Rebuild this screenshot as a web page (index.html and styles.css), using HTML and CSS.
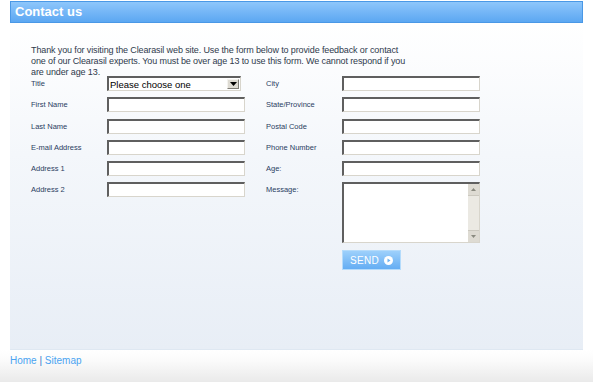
FILE: index.html
```html
<html>
<head>
    <title>Contact us</title>
    <link rel="stylesheet" href="styles.css">
</head>
<body>
    <div class="page">
        <div class="header">
            <h1>Contact us</h1>
        </div>
        <div class="panel">
            <p class="intro">Thank you for visiting the Clearasil web site. Use the form below to provide feedback or contact one of our Clearasil experts. You must be over age 13 to use this form. We cannot respond if you are under age 13.</p>
            <form class="contact-form" onsubmit="return false">
                <div class="col">
                    <label for="title">Title</label>
                    <div class="select-box">
                        <select id="title">
                            <option value="">Please choose one</option>
                            <option value="mr">Mr.</option>
                            <option value="mrs">Mrs.</option>
                            <option value="ms">Ms.</option>
                        </select>
                        <span class="select-btn">
                            <svg width="7" height="4" viewBox="0 0 7 4"><path d="M0 0h7L3.5 4z" fill="#000"/></svg>
                        </span>
                    </div>
                    <label for="first-name">First Name</label>
                    <input type="text" id="first-name">
                    <label for="last-name">Last Name</label>
                    <input type="text" id="last-name">
                    <label for="email">E-mail Address</label>
                    <input type="email" id="email">
                    <label for="address1">Address 1</label>
                    <input type="text" id="address1">
                    <label for="address2">Address 2</label>
                    <input type="text" id="address2">
                </div>
                <div class="col">
                    <label for="city">City</label>
                    <input type="text" id="city">
                    <label for="state">State/Province</label>
                    <input type="text" id="state">
                    <label for="postal">Postal Code</label>
                    <input type="text" id="postal">
                    <label for="phone">Phone Number</label>
                    <input type="tel" id="phone">
                    <label for="age">Age:</label>
                    <input type="text" id="age">
                    <label for="message" class="top">Message:</label>
                    <div class="message-box">
                        <textarea id="message"></textarea>
                        <div class="scrollbar">
                            <span class="scroll-btn"><svg width="5" height="3" viewBox="0 0 5 3"><path d="M0 3h5L2.5 0z" fill="#8a8a80"/></svg></span>
                            <span class="scroll-track"></span>
                            <span class="scroll-btn"><svg width="5" height="3" viewBox="0 0 5 3"><path d="M0 0h5L2.5 3z" fill="#8a8a80"/></svg></span>
                        </div>
                    </div>
                    <span></span>
                    <button type="submit" class="send-btn">SEND
                        <svg width="9" height="9" viewBox="0 0 9 9"><circle cx="4.5" cy="4.5" r="4.5" fill="#fff"/><path d="M3.5 2.5v4l3-2z" fill="#6db3f2"/></svg>
                    </button>
                </div>
            </form>
        </div>
    </div>
    <div class="footer">
        <a href="#">Home</a> | <a href="#">Sitemap</a>
    </div>
</body>
</html>
```

FILE: styles.css
```css
body {
    margin: 0;
    background-color: #fff;
    font-family: "Liberation Sans", Arial, sans-serif;
}

.page {
    margin: 0 10px;
    padding-top: 1px;
}

.header {
    height: 20px;
    border: 1px solid #4a98e6;
    background: linear-gradient(#8ec6fb, #5ca7f2);
    padding-left: 4px;
}

.header h1 {
    margin: 0;
    color: #fff;
    font-size: 13px;
    line-height: 20px;
    font-weight: bold;
}

.panel {
    box-sizing: border-box;
    height: 327px;
    padding: 20px 0 0 21px;
    background: linear-gradient(#ffffff, #f4f7fb 40%, #e8eef6);
    border-bottom: 1px solid #dfe8f2;
}

.intro {
    width: 377px;
    margin: 2px 0 -2px;
    font-size: 9px;
    line-height: 11px;
    letter-spacing: -0.12px;
    color: #2f3a4c;
}

.contact-form {
    display: flex;
    gap: 21px;
}

.col {
    display: grid;
    grid-template-columns: 76px 138px;
    grid-auto-rows: min-content;
    row-gap: 6.3px;
    align-items: center;
}

.col label {
    font-size: 7.5px;
    color: #2a3d62;
}

.col label.top {
    align-self: start;
    line-height: 15px;
}

.col input {
    box-sizing: border-box;
    width: 138px;
    height: 15px;
    margin: 0;
    padding: 0 2px;
    border: 1px solid;
    border-color: #5f5f5f #d8d5cc #d8d5cc #5f5f5f;
    border-top-width: 2px;
    border-left-width: 2px;
    background: #fff;
    font-size: 9px;
}

.select-box {
    box-sizing: border-box;
    display: flex;
    align-items: center;
    width: 134px;
    height: 15px;
    border: 1px solid;
    border-color: #5f5f5f #d8d5cc #d8d5cc #5f5f5f;
    border-top-width: 2px;
    border-left-width: 2px;
    background: #fff;
}

.select-box select {
    flex: 1;
    min-width: 0;
    height: 100%;
    margin: 0;
    padding: 0 0 0 1px;
    border: none;
    outline: none;
    appearance: none;
    background: transparent;
    font-family: "Liberation Sans", Arial, sans-serif;
    font-size: 9.5px;
    color: #000;
}

.select-btn {
    display: flex;
    align-items: center;
    justify-content: center;
    box-sizing: border-box;
    width: 12px;
    height: 10px;
    margin-right: 1px;
    background: #dedbd3;
    border: 1px solid;
    border-color: #f4f3ef #7f7d76 #7f7d76 #f4f3ef;
}

.message-box {
    box-sizing: border-box;
    display: flex;
    width: 138px;
    height: 61px;
    border: 1px solid;
    border-color: #5f5f5f #d8d5cc #d8d5cc #5f5f5f;
    border-top-width: 2px;
    border-left-width: 2px;
    background: #fff;
}

.message-box textarea {
    flex: 1;
    min-width: 0;
    margin: 0;
    padding: 1px;
    border: none;
    outline: none;
    resize: none;
    font-size: 9px;
}

.scrollbar {
    display: flex;
    flex-direction: column;
    width: 11px;
    background: #ebe9e3;
}

.scroll-btn {
    display: flex;
    align-items: center;
    justify-content: center;
    height: 11px;
    background: #dedbd3;
    border-bottom: 1px solid #cbc8bf;
}

.scroll-btn:last-child {
    border-bottom: none;
    border-top: 1px solid #cbc8bf;
}

.scroll-track {
    flex: 1;
}

.send-btn {
    display: flex;
    align-items: center;
    justify-content: center;
    gap: 5px;
    width: 59px;
    height: 20px;
    margin-top: 0.7px;
    padding: 0;
    border: 1px solid #b4dbfb;
    background: linear-gradient(#9dd0fb, #64adf3);
    color: #fff;
    font-family: "Liberation Sans", Arial, sans-serif;
    font-size: 10px;
    letter-spacing: 0.3px;
    cursor: pointer;
}

.footer {
    height: 33px;
    padding-left: 10px;
    background: linear-gradient(#ffffff, #fbfbfb 30%, #e9e9e9);
    font-size: 10px;
    line-height: 22px;
    color: #3a7bc8;
}

.footer a {
    color: #4aa3f1;
    text-decoration: none;
}
```
